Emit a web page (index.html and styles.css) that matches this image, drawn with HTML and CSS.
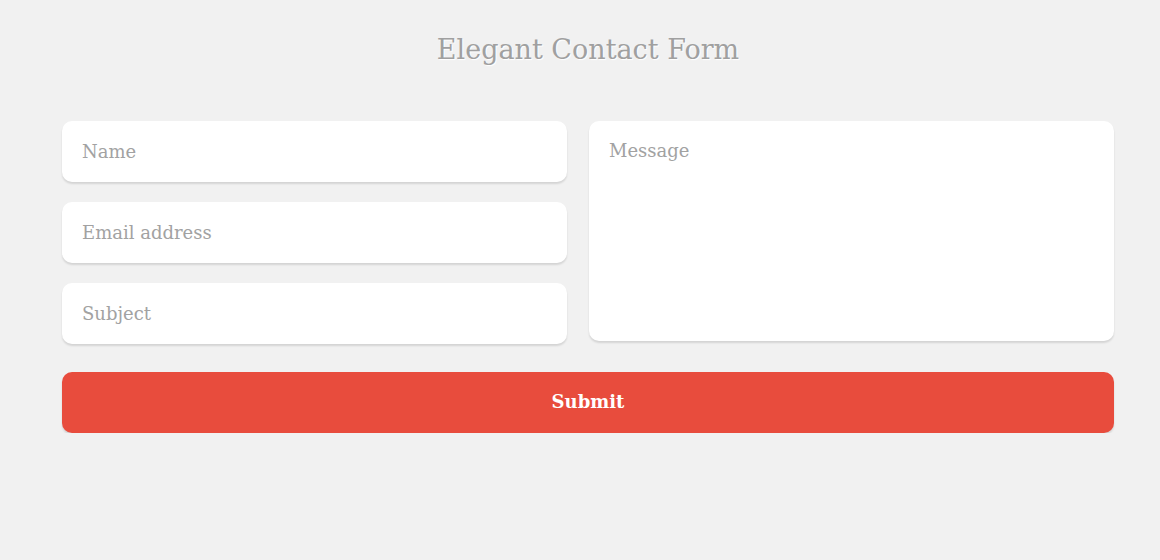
FILE: index.html
```html
<!DOCTYPE html>
<html>
<head>
<meta charset="utf-8">
<link rel="stylesheet" href="styles.css">
</head>
<body>
<div class="page">
  <h1 class="title">Elegant Contact Form</h1>
  <form class="form">
    <div class="grid">
      <div class="left">
        <input class="field" type="text" placeholder="Name">
        <input class="field" type="text" placeholder="Email address">
        <input class="field" type="text" placeholder="Subject">
      </div>
      <textarea class="field message" placeholder="Message"></textarea>
    </div>
    <button class="submit" type="button">Submit</button>
  </form>
</div>
</body>
</html>
```

FILE: styles.css
```css
html, body {
  margin: 0;
  padding: 0;
  background: #f1f1f1;
}
body {
  font-family: "DejaVu Serif", "Liberation Serif", serif;
}
.page {
  padding: 0 46px 0 62px;
}
.title {
  margin: 0;
  padding-top: 33px;
  height: 121px;
  box-sizing: border-box;
  text-align: center;
  font-weight: normal;
  font-size: 27px;
  line-height: 34px;
  color: #a0a0a0;
  text-shadow: 1px 1px 1px #fff;
}
.grid {
  display: grid;
  grid-template-columns: 505px 1fr;
  column-gap: 22px;
  align-items: start;
}
.left {
  display: flex;
  flex-direction: column;
  gap: 20px;
}
.field {
  display: block;
  box-sizing: border-box;
  width: 100%;
  height: 61px;
  margin: 0;
  border: none;
  border-radius: 10px;
  background: #fff;
  box-shadow: 0 2px 2px rgba(0,0,0,0.12);
  padding: 0 20px;
  font-family: inherit;
  font-size: 18px;
  color: #555;
  outline: none;
}
.field::placeholder {
  color: #a2a2a2;
}
.message {
  height: 220px;
  padding: 19px 20px;
  resize: none;
}
.submit {
  display: block;
  box-sizing: border-box;
  width: 100%;
  height: 61px;
  margin-top: 28px;
  padding-bottom: 3px;
  border: none;
  border-radius: 10px;
  background: #e84c3d;
  box-shadow: 0 2px 2px rgba(0,0,0,0.12);
  color: #fff;
  font-family: inherit;
  font-size: 18px;
  font-weight: bold;
  cursor: pointer;
}
```
